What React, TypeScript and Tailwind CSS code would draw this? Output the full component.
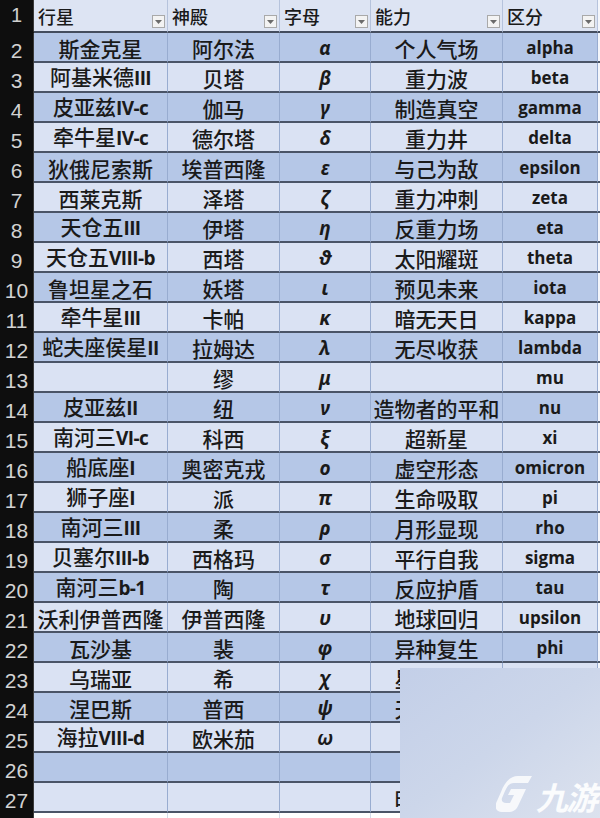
import React from "react";

type Row = [string, string, string, string, string];

const headers = ["行星", "神殿", "字母", "能力", "区分"];

const rows: Row[] = [
  ["斯金克星", "阿尔法", "α", "个人气场", "alpha"],
  ["阿基米德III", "贝塔", "β", "重力波", "beta"],
  ["皮亚兹IV-c", "伽马", "γ", "制造真空", "gamma"],
  ["牵牛星IV-c", "德尔塔", "δ", "重力井", "delta"],
  ["狄俄尼索斯", "埃普西隆", "ε", "与己为敌", "epsilon"],
  ["西莱克斯", "泽塔", "ζ", "重力冲刺", "zeta"],
  ["天仓五III", "伊塔", "η", "反重力场", "eta"],
  ["天仓五VIII-b", "西塔", "ϑ", "太阳耀斑", "theta"],
  ["鲁坦星之石", "妖塔", "ι", "预见未来", "iota"],
  ["牵牛星III", "卡帕", "κ", "暗无天日", "kappa"],
  ["蛇夫座侯星II", "拉姆达", "λ", "无尽收获", "lambda"],
  ["", "缪", "μ", "", "mu"],
  ["皮亚兹II", "纽", "ν", "造物者的平和", "nu"],
  ["南河三VI-c", "科西", "ξ", "超新星", "xi"],
  ["船底座I", "奥密克戎", "ο", "虚空形态", "omicron"],
  ["狮子座I", "派", "π", "生命吸取", "pi"],
  ["南河三III", "柔", "ρ", "月形显现", "rho"],
  ["贝塞尔III-b", "西格玛", "σ", "平行自我", "sigma"],
  ["南河三b-1", "陶", "τ", "反应护盾", "tau"],
  ["沃利伊普西隆", "伊普西隆", "υ", "地球回归", "upsilon"],
  ["瓦沙基", "裴", "φ", "异种复生", "phi"],
  ["乌瑞亚", "希", "χ", "星界漫游", "chi"],
  ["涅巴斯", "普西", "ψ", "天体引力", "psi"],
  ["海拉VIII-d", "欧米茄", "ω", "", "omega"],
  ["", "", "", "", ""],
  ["", "", "", "时间静止", ""],
];

function Mixed({ text }: { text: string }) {
  const parts = text.split(/([A-Za-z0-9\-]+)/);
  return (
    <span className="whitespace-nowrap">
      {parts.map((p, i) =>
        i % 2 === 1 ? (
          <span key={i} className="font-['Open_Sans',sans-serif] font-bold text-[19px] tracking-[-0.6px]">{p}</span>
        ) : (
          <span key={i}>{p}</span>
        )
      )}
    </span>
  );
}

function FilterButton() {
  return (
    <div className="w-[13px] h-[13px] mb-[3px] mr-[2px] bg-[#f3f3f3] border border-[#a9a9a9] flex items-center justify-center shrink-0">
      <svg width="7" height="4" viewBox="0 0 7 4">
        <path d="M0 0 L7 0 L3.5 4 Z" fill="#6b6b6b" />
      </svg>
    </div>
  );
}

const cell = "border-r border-[#98acd0] flex items-end justify-center pb-0";
const cn = "font-['Noto_Sans_CJK_SC',sans-serif] font-medium text-[21px] leading-[26px] text-[#1a1a1a]";

function Logo() {
  return (
    <div className="flex items-end gap-[2px] text-white/90">
      <svg width="38" height="40" viewBox="0 0 38 40">
        <path d="M22 2 L36 2 L32 9 L18 9 C13 9 11 13 9 17 L6 24 C5 27 7 29 10 29 L14 29 L18 21 L12 21 L15 15 L30 15 L22 32 C20 36 17 38 12 38 L6 38 C0 38 -2 33 1 27 L5 18 C8 10 13 2 22 2 Z" fill="currentColor" opacity="0.9" />
      </svg>
      <span className="font-['Noto_Sans_CJK_SC',sans-serif] italic font-bold text-[32px] leading-[36px] tracking-[-2px]">九游</span>
    </div>
  );
}

export default function App() {
  return (
    <div className="relative w-[600px] h-[818px] overflow-hidden bg-white">
      <div className="grid grid-cols-[34px_134px_112px_91px_132px_95px_2px]">
        <div className="h-[33px] bg-[#0e0e0e] border-b-2 border-[#0e0e0e] border-r border-r-[#3a3a3a] flex items-end justify-center pb-[1px] font-['Liberation_Sans',sans-serif] text-[20px] text-[#cfcfcf]">1</div>
        {headers.map((h) => (
          <div key={h} className="h-[33px] bg-[#dde4f3] border-b-2 border-[#444d5e] border-r border-r-[#b6c3dc] flex items-end justify-between">
            <span className="pl-[4px] pb-[4px] font-['Noto_Sans_CJK_SC',sans-serif] font-medium text-[18px] leading-[22px] text-[#1a1a1a]">{h}</span>
            <FilterButton />
          </div>
        ))}
        <div className="h-[33px] bg-[#f4f6fb] border-b-2 border-[#444d5e]" />

        {rows.map((r, i) => {
          const bg = i % 2 === 0 ? "bg-[#b5c7e7]" : "bg-[#dae2f3]";
          const rowCls = `h-[30px] border-b-2 border-b-[#4a5467] ${bg}`;
          return (
            <React.Fragment key={i}>
              <div className="h-[30px] bg-[#0e0e0e] border-r border-[#3a3a3a] flex items-end justify-center pb-0 font-['Liberation_Sans',sans-serif] text-[21px] leading-[24px] text-[#d2d2d2]">
                {i + 2}
              </div>
              <div className={`${rowCls} ${cell} ${cn}`}><Mixed text={r[0]} /></div>
              <div className={`${rowCls} ${cell} ${cn}`}>{r[1]}</div>
              <div className={`${rowCls} ${cell} font-['Noto_Sans',sans-serif] italic font-bold text-[19px] leading-[26px] text-[#1a1a1a]`}>{r[2]}</div>
              <div className={`${rowCls} ${cell} ${cn}`}>{r[3]}</div>
              <div className={`${rowCls} ${cell} font-['Open_Sans',sans-serif] font-bold text-[17px] leading-[26px] text-[#1a1a1a]`}>{r[4]}</div>
              <div className="h-[30px] bg-[#f4f6fb] border-b-2 border-b-[#4a5467]" />
            </React.Fragment>
          );
        })}

        <div className="h-[10px] bg-[#0e0e0e] border-r border-[#3a3a3a]" />
        <div className="h-[10px] border-r border-[#d4dbe8]" />
        <div className="h-[10px] border-r border-[#d4dbe8]" />
        <div className="h-[10px] border-r border-[#d4dbe8]" />
        <div className="h-[10px] border-r border-[#d4dbe8]" />
        <div className="h-[10px] border-r border-[#d4dbe8]" />
        <div className="h-[10px]" />
      </div>

      <div className="absolute left-[400px] top-[668px] w-[200px] h-[150px] bg-gradient-to-br from-[#c3cfe8] via-[#ccd6ea] to-[#dce2ee] flex items-end justify-end pr-[4px] pb-[4px]">
        <Logo />
      </div>
    </div>
  );
}
